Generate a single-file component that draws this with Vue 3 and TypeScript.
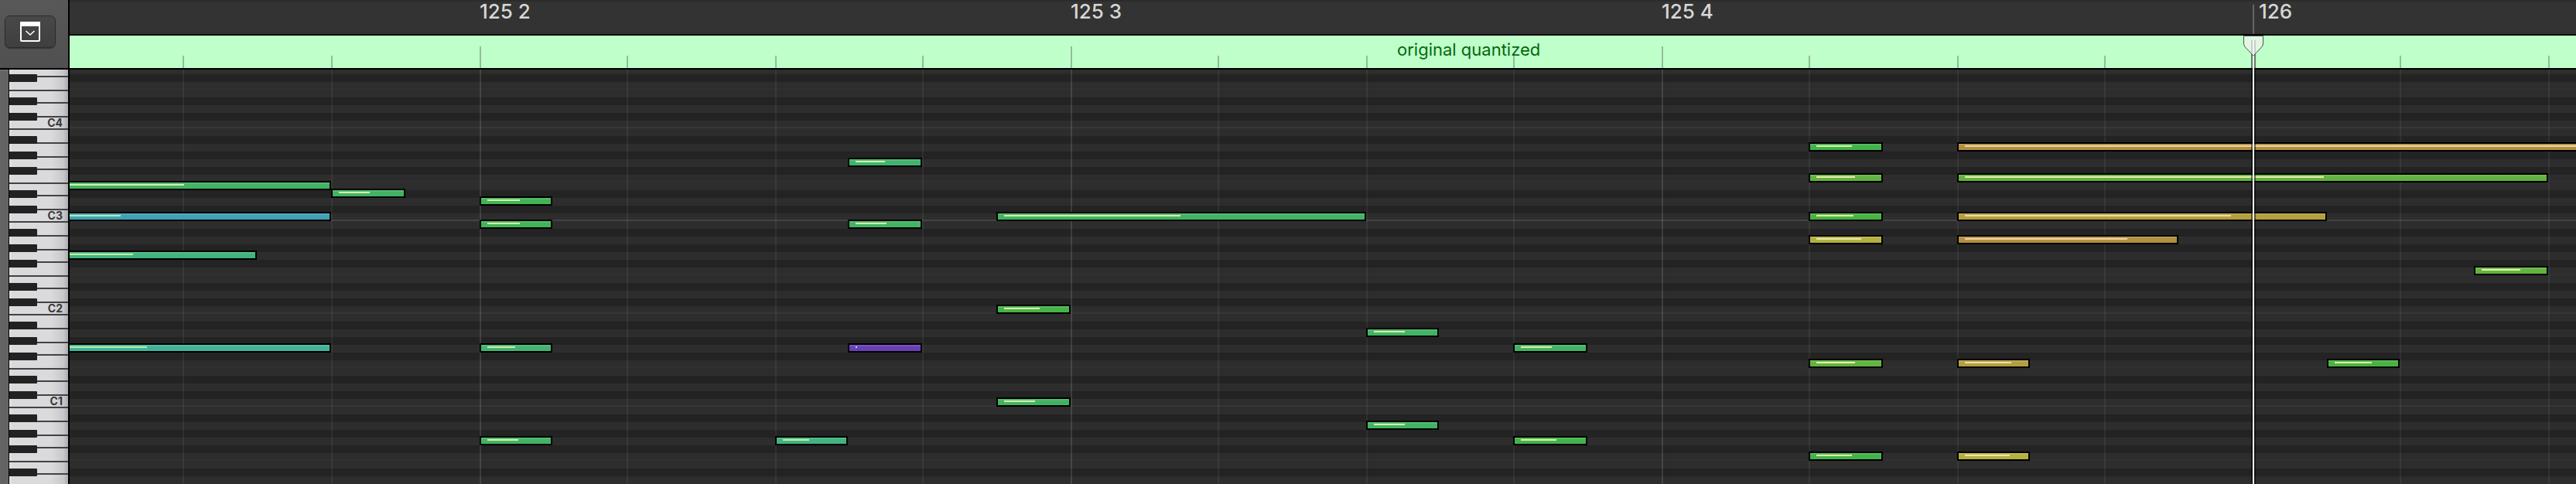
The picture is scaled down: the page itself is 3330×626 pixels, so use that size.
<script setup lang="ts">
import { computed } from 'vue'

type Note = { row: number; start: number; end: number; velocity: number; color: string; mark: string }

const ROW = 10
const TOP_PITCH = 67
const ROW_COUNT = 54
const BLACK_CLASSES = [1, 3, 6, 8, 10]

const rows = Array.from({ length: ROW_COUNT }, (_, i) => {
  const pitch = TOP_PITCH - i
  const pc = pitch % 12
  return {
    id: pitch,
    index: i,
    black: BLACK_CLASSES.includes(pc),
    c: pc === 0,
    middle: pitch === 48,
    f: pc === 5,
  }
})
const blackRows = computed(() => rows.filter((r) => r.black))

const octave = ['B', 'A', 'G', 'F', 'E', 'D', 'C']
const whiteKeys = [
  ...['G4', 'F4', 'E4', 'D4', 'C4'],
  ...[3, 2, 1].flatMap((o) => octave.map((name) => name + o)),
  ...['B0', 'A0', 'G0', 'F0', 'E0', 'D0'],
]

const lines = [236, 428, 620, 810, 1002, 1192, 1384, 1574, 1766, 1956, 2148, 2338, 2530, 2720, 2912, 3102, 3294]
  .map((x, i) => ({ x: x - 90, beat: i % 4 === 2 }))

const labels = [
  { text: '125 2', x: 530, bar: false },
  { text: '125 3', x: 1294, bar: false },
  { text: '125 4', x: 2058, bar: false },
  { text: '126', x: 2822, bar: true },
]

const n = (row: number, start: number, end: number, velocity: number, color: string, mark = '#d5f0a8'): Note => ({
  row, start: start - 90, end: end - 90, velocity: velocity - 90, color, mark,
})

const notes: Note[] = [
  n(15, 60, 428, 238, '#42b364'),
  n(19, 60, 428, 156, '#42a0b5', '#a8f0b8'),
  n(24, 60, 332, 172, '#42b37e', '#bdf0a8'),
  n(36, 60, 428, 190, '#42b39a', '#b0f0a8'),
  n(16, 428, 524, 478, '#42b364'),
  n(17, 620, 714, 672, '#42b357'),
  n(20, 620, 714, 672, '#42b357'),
  n(36, 620, 714, 666, '#42b372', '#c8f0a8'),
  n(48, 620, 714, 670, '#42b364'),
  n(48, 1002, 1096, 1046, '#42b37e', '#bdf0a8'),
  n(12, 1096, 1192, 1144, '#42b36e'),
  n(20, 1096, 1192, 1146, '#42b364'),
  n(36, 1096, 1192, 1108, '#6a40b5', '#a8e8f0'),
  n(19, 1288, 1766, 1526, '#42b364'),
  n(31, 1288, 1384, 1344, '#45b348', '#dcf0a8'),
  n(43, 1288, 1384, 1338, '#42b364'),
  n(34, 1766, 1860, 1816, '#42b364'),
  n(46, 1766, 1860, 1816, '#42b364'),
  n(36, 1956, 2052, 2006, '#42b364'),
  n(48, 1956, 2052, 2012, '#42b34c', '#dcf0a8'),
  n(10, 2338, 2434, 2394, '#42b34c', '#dcf0a8'),
  n(14, 2338, 2434, 2398, '#62b340', '#e8f0a8'),
  n(19, 2338, 2434, 2396, '#48b342', '#e0f0a8'),
  n(22, 2338, 2434, 2406, '#b3b040', '#f0e6a8'),
  n(38, 2338, 2434, 2398, '#62b340', '#e8f0a8'),
  n(50, 2338, 2434, 2394, '#42b34c', '#dcf0a8'),
  n(10, 2530, 3400, 3390, '#b38f40', '#f0d4a8'),
  n(14, 2530, 3294, 3004, '#62b340', '#e8f0a8'),
  n(19, 2530, 3008, 2884, '#b39f40', '#f0dca8'),
  n(22, 2530, 2816, 2750, '#b38f40', '#f0d4a8'),
  n(38, 2530, 2624, 2600, '#b39f40', '#f0dca8'),
  n(50, 2530, 2624, 2598, '#b3b040', '#f0e6a8'),
  n(38, 3008, 3102, 3066, '#48b342', '#e0f0a8'),
  n(26, 3198, 3294, 3258, '#62b340', '#e8f0a8'),
]

const noteStyle = (note: Note) => ({
  left: note.start + 'px',
  top: note.row * ROW - 2 + 'px',
  width: note.end - note.start + 'px',
  backgroundColor: note.color,
})
const markStyle = (note: Note) => ({
  width: note.velocity - note.start - 10 + 'px',
  backgroundColor: note.mark,
})
</script>

<template>
  <main class="editor">
    <div class="corner">
      <button class="menu" type="button" aria-label="Editor options">
        <svg viewBox="0 0 26 26" width="26" height="26" aria-hidden="true">
          <rect x="1" y="1" width="24" height="24" rx="1" fill="none" stroke="#fff" stroke-width="2" />
          <rect x="0" y="0" width="26" height="6" rx="1" fill="#fff" />
          <path d="M7.5 12 L13 17 L18.5 12" fill="none" stroke="#fff" stroke-width="1.6" />
        </svg>
      </button>
    </div>

    <header class="timeline">
      <div class="ruler">
        <span v-for="l in labels" :key="l.text" class="label" :class="{ bar: l.bar }" :style="{ left: l.x + 'px' }">{{ l.text }}</span>
      </div>
      <div class="region">
        <i v-for="l in lines" :key="l.x" class="tick" :class="{ beat: l.beat }" :style="{ left: l.x + 'px' }"></i>
        <span class="name">original quantized</span>
      </div>
    </header>

    <aside class="keyboard">
      <div class="keys">
        <div v-for="k in whiteKeys" :key="k" class="white" :class="k[0]">
          <span v-if="k[0] === 'C'">{{ k }}</span>
        </div>
        <i v-for="r in blackRows" :key="r.id" class="black" :style="{ top: r.index * ROW + 'px' }"></i>
      </div>
    </aside>

    <section class="roll" aria-label="Notes">
      <div class="rows">
        <div v-for="r in rows" :key="r.id" class="row" :class="{ dark: r.black, c: r.c, middle: r.middle, f: r.f }"></div>
        <i v-for="l in lines" :key="l.x" class="line" :class="{ beat: l.beat }" :style="{ left: l.x + 'px' }"></i>
        <div v-for="(note, i) in notes" :key="i" class="note" :style="noteStyle(note)">
          <i class="mark" :style="markStyle(note)"></i>
        </div>
      </div>
    </section>

    <div class="playhead" aria-hidden="true">
      <i class="stem"></i>
      <svg class="handle" viewBox="0 0 32 32" width="32" height="32">
        <path d="M3.5 0.5 H28.5 V10 Q28.5 13 26.5 15 L17 25 Q16 26 15 25 L5.500 15 Q3.5 13 3.5 10 Z" fill="#e6f5e8" fill-opacity="0.92" stroke="#3c5c43" />
        <path d="M13 6 H19 V22 L16 25 L13 22 Z" fill="#c4cec6" />
        <path d="M15 6 H17 V25 H15 Z" fill="#f6f6f6" />
      </svg>
    </div>
  </main>
</template>

<style>
body {
  margin: 0;
  background: #2d2d2d;
}
</style>

<style scoped>
.editor {
  position: relative;
  display: grid;
  grid-template-columns: 88px minmax(0, 1fr);
  grid-template-rows: 88px minmax(0, 1fr);
  gap: 2px;
  height: 100vh;
  overflow: hidden;
  background: #000;
  font-family: Inter, "Liberation Sans", sans-serif;
}
.editor > * {
  overflow: hidden;
}
.corner {
  box-sizing: border-box;
  padding: 20px 16px 26px 6px;
  background: linear-gradient(#585858, #505050);
}
.menu {
  display: flex;
  align-items: center;
  justify-content: center;
  box-sizing: border-box;
  width: 66px;
  height: 42px;
  padding: 0;
  border: 1px solid #2c2c2c;
  border-radius: 7px;
  background: linear-gradient(#484848, #3f3f3f);
  box-shadow: 0 1px 1px #333;
}
.timeline {
  display: flex;
  flex-direction: column;
  gap: 2px;
}
.ruler {
  position: relative;
  box-sizing: border-box;
  height: 44px;
  border-top: 2px solid #2b2b2b;
  background: #333;
}
.label {
  position: absolute;
  top: 0;
  font-size: 26px;
  font-weight: 500;
  line-height: 26px;
  color: #d6d6d6;
  white-space: pre;
}
.label.bar {
  top: 4px;
  height: 38px;
  padding-left: 6px;
  border-left: 2px solid #666;
  line-height: 18px;
}
.region {
  position: relative;
  flex: 1;
  background: #bfffca;
}
.tick {
  position: absolute;
  bottom: 0;
  width: 2px;
  height: 16px;
  background: #8fbf98;
}
.tick.beat {
  height: 28px;
}
.name {
  position: absolute;
  left: 1716px;
  top: 5px;
  font-size: 22px;
  line-height: 26px;
  color: #04690f;
  white-space: nowrap;
}
.keyboard {
  box-sizing: border-box;
  padding-left: 11px;
  background: linear-gradient(#6e6e6e 2px, #636363 2px);
}
.keys {
  position: relative;
  margin-top: -6px;
  border-left: 1px solid #000;
}
.white {
  box-sizing: border-box;
  height: 18px;
  border-bottom: 2px solid #424144;
  background: linear-gradient(90deg, #e4e4e6, #dadadc 4px, #dadadc 54px, #c8c8cc 70px, #acacb0);
  text-align: right;
  font-weight: 700;
  font-size: 14px;
  line-height: 14px;
  color: #38383a;
}
.white span {
  display: block;
  padding-right: 7px;
}
.white.C,
.white.E,
.white.G {
  height: 16px;
}
.black {
  position: absolute;
  left: 0;
  width: 36px;
  height: 10px;
  margin-top: 2px;
  border-radius: 0 1px 1px 0;
  background: #222;
}
.rows {
  position: relative;
  margin-top: -4px;
}
.row {
  box-sizing: border-box;
  height: 10px;
  background: #2d2d2d;
}
.row.dark {
  background: #232323;
}
.row.f {
  border-bottom: 2px solid #303030;
}
.row.c {
  border-bottom: 2px solid #363636;
}
.row.middle {
  border-bottom-color: #434343;
}
.line {
  position: absolute;
  top: 0;
  bottom: 0;
  width: 2px;
  background: rgba(255, 255, 255, 0.06);
}
.line.beat {
  background: rgba(255, 255, 255, 0.12);
}
.note {
  position: absolute;
  box-sizing: border-box;
  height: 12px;
  border: 2px solid #000;
  background-image: linear-gradient(rgba(255, 255, 255, 0.1) 2px, transparent 2px);
}
.mark {
  position: absolute;
  left: 8px;
  top: 2px;
  height: 2px;
}
.playhead {
  position: absolute;
  left: 2897px;
  top: 46px;
  bottom: 0;
  width: 32px;
}
.stem {
  position: absolute;
  left: 13px;
  top: 6px;
  bottom: 0;
  width: 2px;
  border: solid rgba(0, 0, 0, 0.5);
  border-width: 0 2px;
  background: #fff;
  background-clip: padding-box;
}
.handle {
  position: absolute;
  left: 0;
  top: 0;
}
</style>
